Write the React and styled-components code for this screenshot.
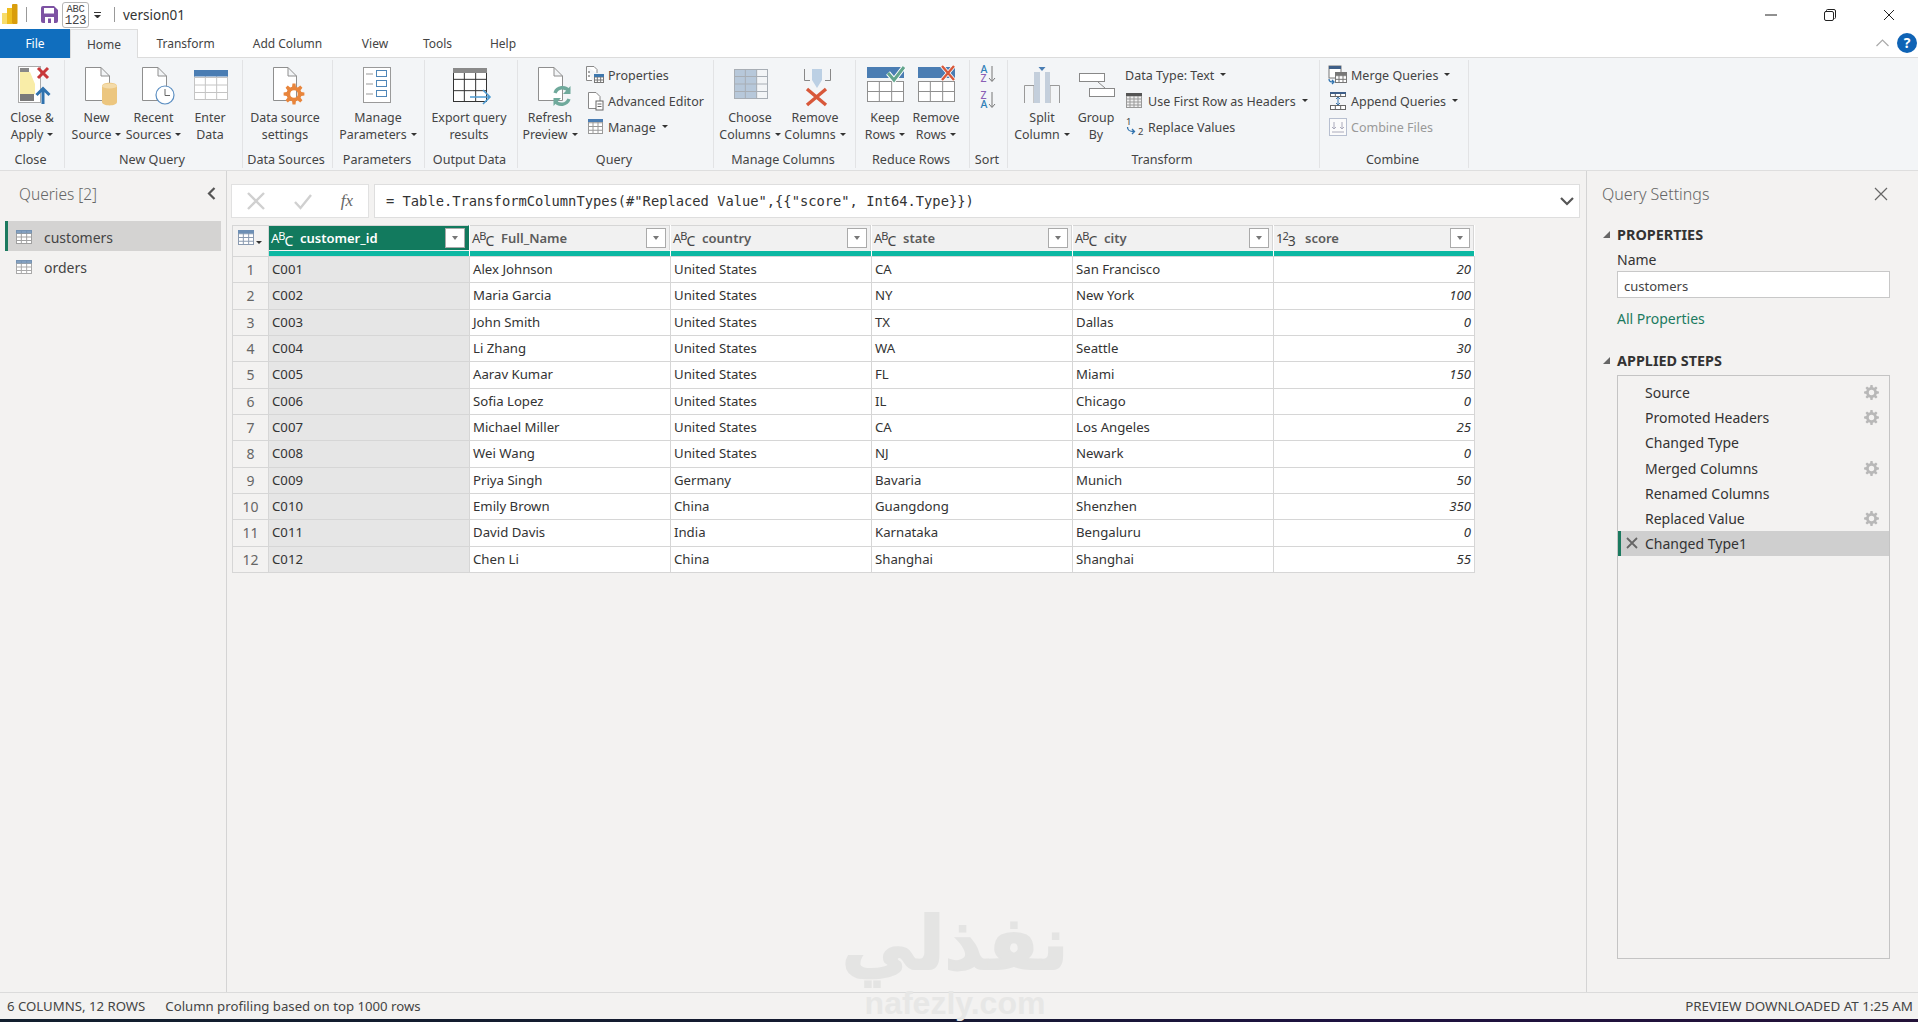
import React from 'react';
import styled, { createGlobalStyle } from 'styled-components';

const UI = '"Noto Sans", "Open Sans", "Liberation Sans", sans-serif';

const Global = createGlobalStyle`
  html, body { margin: 0; padding: 0; background: #f3f2f1; }
  body { font-family: ${UI}; color: #333; overflow: hidden; }
  * { box-sizing: border-box; }
`;

const Page = styled.div`
  position: relative; width: 1918px; height: 1022px; overflow: hidden;
  display: flex; flex-direction: column; background: #f3f2f1;
`;

/* ---------- title bar ---------- */
const TitleBar = styled.div`
  height: 29px; background: #fff; display: flex; align-items: center; padding-left: 2px; flex: none;
`;
const TitleSep = styled.span`width: 1px; height: 15px; background: #999; margin: ${p => p.$m};`;
const Abc = styled.div`
  width: 27px; height: 26px; border: 1px solid #b5b5b5; border-radius: 3px; background: #fff; margin-left: 4px;
  font: 10.5px/11px "Liberation Mono", monospace; letter-spacing: -0.3px; color: #444; text-align: center; padding-top: 1px;
`;
const Abc2 = styled.div`font-size: 12.5px; line-height: 12px;`;
const QuickCaret = styled.div`
  width: 7px; margin-left: 5px; border-top: 1px solid #333; padding-top: 2px; height: 6px;
  &::after { content: ''; display: block; border: 3.5px solid transparent; border-top-color: #333; border-bottom: 0; }
`;
const DocName = styled.div`font-size: 13.5px; color: #333; `;
const WinButtons = styled.div`margin-left: auto; display: flex; gap: 0; align-items: center; padding-right: 0; color: #222;`;
const WinBtn = styled.div`width: 59px; display: flex; justify-content: center;`;

/* ---------- tabs ---------- */
const TabBar = styled.div`
  height: 29px; display: flex; align-items: stretch; background: #fff; border-bottom: 1px solid #dcdcdc; flex: none; font-size: 12px;
`;
const FileTab = styled.div`
  width: 70px; background: #106ebe; color: #fff; display: flex; align-items: center; justify-content: center; margin-bottom: -1px;
`;
const Tab = styled.div`
  width: ${p => p.$w}px; display: flex; align-items: center; justify-content: center; color: #444;
  ${p => p.$active ? 'background:#f3f5f7;border:1px solid #dcdcdc;border-bottom:0;margin-bottom:-1px;' : ''}
`;
const TabRight = styled.div`margin-left: auto; display: flex; align-items: center; gap: 8px; padding-right: 1px;`;
const Help = styled.div`
  width: 20px; height: 20px; border-radius: 50%; background: #0f63b5; color: #fff; font: bold 14px/20px ${UI}; text-align: center;
`;

/* ---------- ribbon ---------- */
const Ribbon = styled.div`
  height: 113px; background: #f3f5f7; border-bottom: 1px solid #dedede; display: flex; flex: none; padding: 2px 0 2px;
`;
const Group = styled.div`
  width: ${p => p.$w}px; border-right: 1px solid #e2e3e5; display: flex; flex-direction: column; flex: none;
`;
const GroupBody = styled.div`flex: 1; display: flex; align-items: flex-start; padding-left: ${p => p.$pl || 0}px; padding-top: 4px;`;
const GroupLabel = styled.div`
  height: 20px; text-align: center; font-size: 12.6px; line-height: 24px; color: #444; padding-right: 3px; margin-bottom: 0; white-space: nowrap;
`;
const Large = styled.div`
  width: ${p => p.$w}px; flex: none; display: flex; flex-direction: column; align-items: center;
`;
const IconSlot = styled.div`width: 44px; height: 42px; flex: none;`;
const LargeLabel = styled.div`
  margin-top: 3px; font-size: 12.4px; line-height: 17px; color: #444; text-align: center; white-space: nowrap;
`;
const Caret = styled.span`
  display: inline-block; vertical-align: middle; margin-left: ${p => p.$ml ?? 4}px; position: relative; top: -1px;
  border: 3px solid transparent; border-top: 3.5px solid #333; border-bottom: 0;
`;
const CornerCaret = styled(Caret)`margin-left: 0; top: 11px;`;
const SmallCol = styled.div`display: flex; flex-direction: column; margin-left: ${p => p.$ml || 0}px; margin-top: -2px;`;
const SmallRow = styled.div`
  height: 26px; display: flex; align-items: center; font-size: 12.5px; color: ${p => p.$off ? '#999' : '#444'}; white-space: nowrap;
`;
const SmallIcon = styled.span`width: ${p => p.$w || 20}px; height: 20px; flex: none; display: flex; align-items: center; margin-right: ${p => p.$mr ?? 3}px;`;
const SortCol = styled.div`width: 100%; display: flex; flex-direction: column; align-items: center; gap: 8px; padding-top: 1px;`;
const SortItem = styled.div`display: flex; align-items: center; gap: 1px;`;
const SortLetters = styled.div`display: flex; flex-direction: column;`;
const SortLetter = styled.span`display: block; height: 9px; font: 500 10.5px/9px ${UI}; color: ${p => p.$c};`;

/* ---------- main ---------- */
const Main = styled.div`flex: 1; display: flex; min-height: 0;`;
const Left = styled.div`width: 227px; border-right: 1px solid #d4d4d4; flex: none; padding: 1px 5px 0; display: flex; flex-direction: column;`;
const LeftHead = styled.div`height: 49px; display: flex; align-items: center; justify-content: space-between; padding: 0 5px 6px 14px; font-size: 15.5px; color: #666; font-weight: 300;`;
const QueryRow = styled.div`
  height: 30px; width: 216px; display: flex; align-items: center; gap: 11px; font-size: 14px; color: #444; padding: 2px 0 0 ${p => p.$on ? 8 : 11}px;
  ${p => p.$on ? 'background:#d4d3d2;border-left:3px solid #1b7a5f;' : ''}
`;
const Center = styled.div`flex: 1; padding: 13px 6px 0 4px; min-width: 0;`;
const FormulaRow = styled.div`display: flex; gap: 5px; height: 34px; `;
const FxBox = styled.div`
  width: 138px; background: #fff; border: 1px solid #e1e1e1; display: flex; align-items: center; justify-content: space-between; padding: 0 15px 0 15px;
`;
const FxText = styled.span`font: italic 17px "Liberation Serif", serif; color: #666;`;
const FormulaBox = styled.div`
  flex: 1; background: #fff; border: 1px solid #dedede; display: flex; align-items: center; justify-content: space-between;
  padding: 0 5px 0 11px; font: 13.75px "DejaVu Sans Mono", monospace; color: #333; white-space: pre;
`;

const Table = styled.div`
  margin: 7px 0 0 1px; width: 1243px; display: grid; grid-template-columns: 36px repeat(6, 201px);
  grid-auto-rows: 26.33px; grid-template-rows: 31px; border-left: 1px solid #d6d6d6; border-bottom: 1px solid #d6d6d6;
`;
const Corner = styled.div`
  background: #f3f2f1; border-right: 1px solid #d6d6d6; border-top: 1px solid #d6d6d6;
  display: flex; align-items: flex-start; padding: 4px 0 0 5px; gap: 1px;
`;
const Head = styled.div`display: flex; flex-direction: column; min-width: 0; border-right: 1px solid #fff;`;
const HeadTop = styled.div`
  height: 25px; flex: none; display: flex; align-items: center; padding: 0 3px 0 2px; border-top: 1px solid #d6d6d6;
  background: ${p => p.$on ? '#127a5e' : '#f1f1f1'}; color: ${p => p.$on ? '#fff' : '#5c5c5c'}; font-size: 13px; font-weight: 600; border-right: 1px solid ${p => p.$on ? '#127a5e' : '#d6d6d6'};
`;
const TypeIcon = styled.span`
  width: 23px; flex: none; font-size: 13px; font-weight: 400; line-height: 14px; white-space: nowrap; letter-spacing: -1px;
  color: ${p => p.$on ? '#fff' : '#444'};
`;
const Sup = styled.span`position: relative; top: -3px; font-size: 11px;`;
const Sub = styled.span`position: relative; top: 3px; font-size: 14px;`;
const HeadName = styled.span`margin-left: 6px; flex: 1;`;
const Filter = styled.div`
  width: 20px; height: 20px; background: #fff; border: 1px solid #aaa; display: flex; align-items: center; justify-content: center;
  &::after { content: ''; border: 3.5px solid transparent; border-top: 4px solid #777; border-bottom: 0; }
`;
const Teal = styled.div`height: 5px; margin-top: 1px; background: #0cb8a3; `;
const Idx = styled.div`
  background: #f3f2f1; border-right: 1px solid #d6d6d6; border-top: 1px solid #d6d6d6; text-align: center; font-size: 14px; line-height: 26px; color: #666;
`;
const Cell = styled.div`
  background: ${p => p.$on ? '#e6e6e6' : '#fff'}; border-right: 1px solid #d6d6d6; border-top: 1px solid #d6d6d6; padding: 0 3px; font-size: 13.2px; line-height: 25px; color: #333;
  text-align: ${p => p.$num ? 'right' : 'left'}; font-style: ${p => p.$num ? 'italic' : 'normal'}; white-space: nowrap; overflow: hidden;
`;

/* ---------- right pane ---------- */
const Right = styled.div`width: 332px; flex: none; padding: 0 28px 0 30px; border-left: 1px solid #d4d4d4; position: relative; display: flex; flex-direction: column;`;
const RightHead = styled.div`height: 50px; margin-left: -15px; margin-right: 2px; padding-bottom: 5px; display: flex; align-items: center; justify-content: space-between; font-size: 16px; color: #666; font-weight: 300;`;
const Section = styled.div`
  height: 26px; display: flex; align-items: center; font-size: 14.4px; font-weight: 700; color: #333; margin-left: -14px; gap: 7px; margin-top: ${p => p.$mt || 0}px; white-space: nowrap;
`;
const SectionTri = styled.span`width: 0; height: 0; border-style: solid; border-width: 0 0 7px 7px; border-color: transparent transparent #666 transparent;`;
const FieldLabel = styled.div`font-size: 14px; line-height: 18px; margin-top: 4px; color: #333;`;
const NameInput = styled.div`
  height: 27px; margin-top: 2px; background: #fff; border: 1px solid #c8c8c8; padding: 2px 6px 0; font-size: 13px; line-height: 25px; color: #444;
`;
const AllProps = styled.div`margin-top: 12px; height: 19px; font-size: 14px; line-height: 17px; color: #1b7a5f;`;
const Steps = styled.div`height: 584px; border: 1px solid #c4c4c4; padding-top: 4px; margin-top: 2px;`;
const Step = styled.div`
  height: 25.2px; display: flex; align-items: center; font-size: 14px; color: #333; position: relative; padding: 0 10px 0 27px;
  ${p => p.$on ? 'background:#cfcfcf;border-left:3px solid #1b7a5f;padding-left:24px;' : ''}
`;
const StepX = styled.span`position: absolute; left: 5px; top: 6px; display: flex;`;
const StepName = styled.span`flex: 1;`;

/* ---------- status ---------- */
const Status = styled.div`
  height: 27px; flex: none; border-top: 1px solid #dbdbdb; display: flex; align-items: center; font-size: 13.2px; color: #444; padding: 0 5px 0 7px;
`;
const StatusSecond = styled.span`margin-left: 20px;`;
const StatusRight = styled.span`margin-left: auto; font-size: 13.4px;`;
const Strip = styled.div`height: 3px; flex: none; background: linear-gradient(90deg, #121f2e, #141a30 45%, #1d1240 70%, #231238);`;

const Mark = styled.div`
  position: absolute; left: 830px; top: 903px; width: 250px; text-align: center; pointer-events: none; color: #e4e4e3;
  font: bold 74px/80px "DejaVu Sans", sans-serif; -webkit-text-stroke: 2px #e4e4e3;
`;
const MarkLatin = styled.div`
  position: absolute; left: 830px; top: 985px; width: 250px; height: 37px; text-align: center; pointer-events: none; color: #e7e7e6;
  font: bold 32px/37px "Liberation Sans", sans-serif;
`;

/* ---------- icons ---------- */
const Svg = ({ children, w = 44, h = 42 }) => (
  <svg width={w} height={h} viewBox={`0 0 ${w} ${h}`} style={{ overflow: 'visible', display: 'block' }}>{children}</svg>
);
const GRAY = '#8f8f8f';
const Doc = ({ x = 10, y = 3, w = 25, h = 34 }) => (
  <path d={`M${x + .5} ${y + .5}H${x + w - 9}L${x + w - .5} ${y + 9}V${y + h - .5}H${x + .5}Z M${x + w - 9} ${y + .5}V${y + 9}H${x + w - .5}`} fill="#fff" stroke={GRAY} strokeWidth="1" />
);
const gearPath = (cx, cy, r) => {
  const n = 8;
  const inner = r * .72;
  const pts = [];
  for (let i = 0; i < n; i++) {
    const a = (i * 2 * Math.PI) / n - Math.PI / 2;
    const w = Math.PI / n / 1.9;
    [[inner, a - w * 1.25], [r, a - w * .7], [r, a + w * .7], [inner, a + w * 1.25]].forEach(([rr, t]) => {
      pts.push(`${(cx + rr * Math.cos(t)).toFixed(2)} ${(cy + rr * Math.sin(t)).toFixed(2)}`);
    });
  }
  const h = r * .36;
  return `M${pts.join('L')}Z M${cx - h} ${cy}a${h} ${h} 0 1 0 ${2 * h} 0a${h} ${h} 0 1 0 ${-2 * h} 0Z`;
};
const Gear = ({ cx, cy, r, c }) => <path d={gearPath(cx, cy, r)} fill={c} fillRule="evenodd" />;
const GridIcon = ({ x, y, w, h, cols, rows, line = '#c6c6c6', fill = '#fff' }) => {
  const vs = Array.from({ length: cols - 1 }, (_, i) => x + (w * (i + 1)) / cols);
  const hs = Array.from({ length: rows - 1 }, (_, i) => y + (h * (i + 1)) / rows);
  return (
    <g>
      <rect x={x + .5} y={y + .5} width={w - 1} height={h - 1} fill={fill} stroke={line} />
      {vs.map(v => <line key={v} x1={v} x2={v} y1={y} y2={y + h} stroke={line} />)}
      {hs.map(v => <line key={v} y1={v} y2={v} x1={x} x2={x + w} stroke={line} />)}
    </g>
  );
};
const IcoClose = () => (
  <Svg>
    <rect x="8.5" y="2.5" width="22" height="36" fill="#fff" stroke="#aaa" />
    <rect x="10" y="4" width="9" height="4" fill="#888" />
    <path d="M10 8H20L25 20V30H10Z" fill="#f9eda8" />
    <rect x="10" y="30" width="14" height="7" fill="#7a7a7a" />
    <path d="M28 4L38 14M38 4L28 14" stroke="#c8383a" strokeWidth="3" />
    <path d="M33 40V26M26.5 31L33 24.5L39.5 31" stroke="#2f72ae" strokeWidth="3" fill="none" />
  </Svg>
);
const IcoNew = () => (
  <Svg><Doc />
    <path d="M27 22C27 17.5 42 17.5 42 22V38C42 42.5 27 42.5 27 38Z" fill="#ecc67f" />
    <ellipse cx="34.5" cy="22" rx="7.5" ry="2.4" fill="#f4dba9" />
  </Svg>
);
const IcoRecent = () => (
  <Svg><Doc />
    <circle cx="33" cy="31" r="9" fill="#fff" stroke="#5c8fc2" strokeWidth="1.2" />
    <path d="M33 25V31.5H38" fill="none" stroke="#666" />
  </Svg>
);
const IcoEnter = () => (
  <Svg>
    <GridIcon x={6} y={6} w={34} h={30} cols={3} rows={4} line="#c4c4c4" />
    <rect x="6" y="6" width="34" height="6.5" fill="#4a7db3" />
  </Svg>
);
const IcoSettings = () => (
  <Svg><Doc x={10} w={24} /><Gear cx={31} cy={30} r={10.5} c="#e8853c" /></Svg>
);
const IcoParams = () => (
  <Svg>
    <rect x="7.5" y="3.5" width="27" height="35" fill="#fff" stroke="#9a9a9a" />
    {[10, 20, 30].map(y => <line key={y} x1="10" x2="17" y1={y} y2={y} stroke="#999" />)}
    {[7, 17, 27].map(y => <rect key={y} x="20.5" y={y - .5} width="10" height="6" fill="#fff" stroke="#4e86b8" />)}
  </Svg>
);
const IcoExport = () => (
  <Svg>
    <GridIcon x={6} y={4} w={34} h={34} cols={3} rows={3} line="#333" />
    <rect x="6" y="4" width="34" height="5" fill="#8a8a8a" />
    <path d="M23 33H43M36 26L43 33L36 40" fill="none" stroke="#4e9bd1" strokeWidth="1.6" />
  </Svg>
);
const IcoRefresh = () => (
  <Svg><Doc />
    <path d="M27 29A8 8 0 0 1 41 27" fill="none" stroke="#6fa99b" strokeWidth="3.4" />
    <path d="M42.5 22V30H35Z" fill="#6fa99b" />
    <path d="M41 35A8 8 0 0 1 27 37" fill="none" stroke="#6fa99b" strokeWidth="3.4" />
    <path d="M25.5 42V34H33Z" fill="#6fa99b" />
  </Svg>
);
const IcoChoose = () => (
  <Svg>
    <rect x="6" y="5" width="23" height="30" fill="#b7c8da" />
    <GridIcon x={6} y={5} w={34} h={30} cols={3} rows={4} line="#a8aeb5" fill="none" />
  </Svg>
);
const IcoRemoveCols = () => (
  <Svg>
    <path d="M11.5 5V16.5H17M37.5 5V16.5H32" fill="none" stroke="#888" />
    <path d="M19 5H29V16L24 24L19 16Z" fill="#bcd0e4" />
    <path d="M14 25L33 41M33 25L14 41" stroke="#d8583a" strokeWidth="3.4" />
  </Svg>
);
const IcoKeep = () => (
  <Svg>
    <rect x="4" y="3" width="37" height="11" fill="#4a7db3" />
    <GridIcon x={4} y={17} w={37} h={21} cols={3} rows={2} line="#8f8f8f" />
    <path d="M25 9L31 16L41 3" fill="none" stroke="#fff" strokeWidth="5" />
    <path d="M25 9L31 16L41 3" fill="none" stroke="#62a58d" strokeWidth="3" />
  </Svg>
);
const IcoRemoveRows = () => (
  <Svg>
    <rect x="4" y="3" width="37" height="11" fill="#4a7db3" />
    <GridIcon x={4} y={17} w={37} h={21} cols={3} rows={2} line="#8f8f8f" />
    <path d="M28 2L40 16M40 2L28 16" stroke="#fff" strokeWidth="4" />
    <path d="M28 2L40 16M40 2L28 16" stroke="#d8583a" strokeWidth="2.4" />
  </Svg>
);
const IcoSplit = () => (
  <Svg>
    <path d="M14 39V21.5H4.5V39M30 39V21.5H39.5V39" fill="none" stroke="#999" />
    <rect x="14" y="8" width="6" height="31" fill="#c4cfdc" />
    <rect x="25" y="8" width="5" height="31" fill="#c4cfdc" />
    <path d="M18.5 3H25.5L22 7Z" fill="#4a7db3" />
  </Svg>
);
const IcoGroup = () => (
  <Svg>
    <rect x="5.5" y="9.5" width="25" height="8" fill="#fff" stroke="#888" />
    <rect x="15.5" y="24.5" width="25" height="8" fill="#fff" stroke="#888" />
    <path d="M24 18L31 24" stroke="#888" />
  </Svg>
);
const SmProps = () => (
  <Svg w={20} h={20}>
    <path d="M1.5 1.5H9L12 4.5V8M1.5 1.5V15.5H7" fill="#fff" stroke="#888" />
    <circle cx="4" cy="7" r="1" fill="#888" /><circle cx="4" cy="11" r="1" fill="#888" />
    <GridIcon x={9} y={9} w={10} h={9} cols={3} rows={3} line="#777" />
    <rect x="9" y="9" width="10" height="3" fill="#3f78ad" />
  </Svg>
);
const SmEditor = () => (
  <Svg w={20} h={20}>
    <path d="M3.5 1.5H11L15 5.5V17.5H3.5Z" fill="#fff" stroke="#888" />
    <rect x="11" y="10" width="7" height="9" fill="#fff" stroke="#666" />
    <path d="M12.5 13H16.5M12.5 15.5H16.5" stroke="#666" />
  </Svg>
);
const SmManage = () => (
  <Svg w={20} h={20}>
    <GridIcon x={3} y={2} w={15} h={15} cols={3} rows={4} line="#999" />
    <rect x="3" y="2" width="15" height="3" fill="#4a7db3" />
  </Svg>
);
const SmHeaders = () => (
  <Svg w={20} h={20}>
    <GridIcon x={1} y={2} w={16} h={15} cols={4} rows={5} line="#999" fill="#f0f0f0" />
    <rect x="1" y="2" width="16" height="3" fill="#555" />
  </Svg>
);
const SmReplace = () => (
  <Svg w={20} h={20}>
    <text x="1" y="8" fontSize="9.5" fill="#444" fontFamily={UI}>1</text>
    <text x="13" y="18" fontSize="9.5" fill="#444" fontFamily={UI}>2</text>
    <path d="M2.5 10C2.5 14 5 14.5 9 14.5M7 12L9.5 14.5L7 17" fill="none" stroke="#2f72ae" strokeWidth="1.3" />
  </Svg>
);
const SmMerge = () => (
  <Svg w={20} h={20}>
    <rect x="1" y="1" width="12" height="12" fill="#fff" stroke="#777" />
    <rect x="1" y="1" width="12" height="3" fill="#3f5f88" />
    <GridIcon x={7} y={7} w={12} h={11} cols={3} rows={3} line="#777" />
    <rect x="7" y="7" width="12" height="3" fill="#777" />
    <path d="M1 14C1 17 3 17 6 17M4 15L6 17L4 19" fill="none" stroke="#2f72ae" strokeWidth="1.3" />
  </Svg>
);
const SmAppend = () => (
  <Svg w={20} h={20}>
    <GridIcon x={2} y={1} w={16} h={5} cols={3} rows={1} line="#666" />
    <rect x="2" y="1" width="16" height="2" fill="#3f5f88" />
    <GridIcon x={2} y={14} w={16} h={5} cols={3} rows={1} line="#666" />
    <path d="M10 6V14M8 8L10 6L12 8M8 12L10 14L12 12" fill="none" stroke="#3f78ad" />
  </Svg>
);
const SmCombine = () => (
  <Svg w={20} h={20}>
    <rect x="1.5" y="1.5" width="17" height="17" fill="#fbfbfb" stroke="#b7bfd0" />
    <path d="M6 5V12M4 10L6 12L8 10M14 5V12M12 10L14 12L16 10M4 15H16" fill="none" stroke="#aab" />
  </Svg>
);
const TableMini = ({ faded }) => (
  <Svg w={17} h={15}>
    <GridIcon x={0} y={0} w={16} h={14} cols={3} rows={4} line={faded ? '#a9a9a9' : '#a0a0a0'} />
    <rect x="0" y="0" width="16" height="3.4" fill="#6d8fb5" opacity=".85" />
  </Svg>
);
const Logo = () => (
  <Svg w={16} h={21}>
    <rect x="0" y="9" width="5.5" height="11" fill="#f7dc6b" />
    <rect x="5" y="4" width="5.5" height="16" fill="#efbe1f" />
    <rect x="10" y="0" width="5.5" height="20" rx="1" fill="#d99d0b" />
  </Svg>
);
const Save = () => (
  <Svg w={17} h={17}>
    <path d="M0 2Q0 0 2 0H13L17 4V15Q17 17 15 17H2Q0 17 0 15Z" fill="#7d52a3" />
    <rect x="3" y="2" width="10" height="5.5" fill="#fff" />
    <rect x="4" y="11" width="9" height="6" fill="#fff" />
    <rect x="7" y="12.5" width="3" height="4.5" fill="#7d52a3" />
  </Svg>
);
const X = ({ s = 16, c = '#c8c8c8', w = 2 }) => (
  <Svg w={s} h={s}><path d={`M1 1L${s - 1} ${s - 1}M${s - 1} 1L1 ${s - 1}`} stroke={c} strokeWidth={w} fill="none" /></Svg>
);

/* ---------- data ---------- */
const rows = [
  ['C001', 'Alex Johnson', 'United States', 'CA', 'San Francisco', 20],
  ['C002', 'Maria Garcia', 'United States', 'NY', 'New York', 100],
  ['C003', 'John Smith', 'United States', 'TX', 'Dallas', 0],
  ['C004', 'Li Zhang', 'United States', 'WA', 'Seattle', 30],
  ['C005', 'Aarav Kumar', 'United States', 'FL', 'Miami', 150],
  ['C006', 'Sofia Lopez', 'United States', 'IL', 'Chicago', 0],
  ['C007', 'Michael Miller', 'United States', 'CA', 'Los Angeles', 25],
  ['C008', 'Wei Wang', 'United States', 'NJ', 'Newark', 0],
  ['C009', 'Priya Singh', 'Germany', 'Bavaria', 'Munich', 50],
  ['C010', 'Emily Brown', 'China', 'Guangdong', 'Shenzhen', 350],
  ['C011', 'David Davis', 'India', 'Karnataka', 'Bengaluru', 0],
  ['C012', 'Chen Li', 'China', 'Shanghai', 'Shanghai', 55],
];
const cols = ['customer_id', 'Full_Name', 'country', 'state', 'city', 'score'];
const steps = [
  ['Source', true], ['Promoted Headers', true], ['Changed Type', false], ['Merged Columns', true],
  ['Renamed Columns', false], ['Replaced Value', true], ['Changed Type1', false],
];

const Btn = ({ w, icon, l1, l2, caret }) => (
  <Large $w={w}>
    <IconSlot>{icon}</IconSlot>
    <LargeLabel>{l1}<br />{l2}{caret && <Caret />}</LargeLabel>
  </Large>
);
const Sm = ({ icon, children, caret, off, iw, mr, cm }) => (
  <SmallRow $off={off}>
    {icon && <SmallIcon $w={iw} $mr={mr}>{icon}</SmallIcon>}
    {children}{caret && <Caret $ml={cm ?? 6} />}
  </SmallRow>
);
const Arrow = () => (
  <Svg w={8} h={17}><path d="M4 0V15M1 12L4 15.5L7 12" fill="none" stroke="#777" /></Svg>
);

export default function App() {
  return (
    <Page>
      <Global />
      <TitleBar>
        <Logo />
        <TitleSep $m="0 14px 0 8px" />
        <Save />
        <Abc>ABC<Abc2>123</Abc2></Abc>
        <QuickCaret />
        <TitleSep $m="0 8px 0 13px" />
        <DocName>version01</DocName>
        <WinButtons>
          <WinBtn><Svg w={12} h={12}><path d="M0 6H12" stroke="#222" /></Svg></WinBtn>
          <WinBtn><Svg w={12} h={12}><path d="M2.5 2.5V1.5Q2.5 .5 3.5 .5H10Q11.5 .5 11.5 2V8.5Q11.5 9.5 10.5 9.5M1.5 2.5H8Q9.5 2.5 9.5 4V10Q9.5 11.5 8 11.5H2Q.5 11.5 .5 10V4Q.5 2.5 2 2.5Z" fill="none" stroke="#222" /></Svg></WinBtn>
          <WinBtn><X s={12} c="#222" w={1} /></WinBtn>
        </WinButtons>
      </TitleBar>
      <TabBar>
        <FileTab>File</FileTab>
        <Tab $w={68} $active>Home</Tab>
        <Tab $w={95}>Transform</Tab>
        <Tab $w={109}>Add Column</Tab>
        <Tab $w={66}>View</Tab>
        <Tab $w={59}>Tools</Tab>
        <Tab $w={72}>Help</Tab>
        <TabRight>
          <Svg w={13} h={8}><path d="M.5 7L6.5 1L12.5 7" fill="none" stroke="#aaa" strokeWidth="1.2" /></Svg>
          <Help>?</Help>
        </TabRight>
      </TabBar>
      <Ribbon>
        <Group $w={65}>
          <GroupBody><Btn w={64} icon={<IcoClose />} l1="Close &" l2="Apply" caret /></GroupBody>
          <GroupLabel>Close</GroupLabel>
        </Group>
        <Group $w={178}>
          <GroupBody $pl={3}>
            <Btn w={57} icon={<IcoNew />} l1="New" l2="Source" caret />
            <Btn w={57} icon={<IcoRecent />} l1="Recent" l2="Sources" caret />
            <Btn w={56} icon={<IcoEnter />} l1="Enter" l2="Data" />
          </GroupBody>
          <GroupLabel>New Query</GroupLabel>
        </Group>
        <Group $w={90}>
          <GroupBody><Btn w={84} icon={<IcoSettings />} l1="Data source" l2="settings" /></GroupBody>
          <GroupLabel>Data Sources</GroupLabel>
        </Group>
        <Group $w={92}>
          <GroupBody><Btn w={90} icon={<IcoParams />} l1="Manage" l2="Parameters" caret /></GroupBody>
          <GroupLabel>Parameters</GroupLabel>
        </Group>
        <Group $w={93}>
          <GroupBody><Btn w={88} icon={<IcoExport />} l1="Export query" l2="results" /></GroupBody>
          <GroupLabel>Output Data</GroupLabel>
        </Group>
        <Group $w={196}>
          <GroupBody $pl={2}>
            <Btn w={60} icon={<IcoRefresh />} l1="Refresh" l2="Preview" caret />
            <SmallCol $ml={5}>
              <Sm icon={<SmProps />}>Properties</Sm>
              <Sm icon={<SmEditor />}>Advanced Editor</Sm>
              <Sm icon={<SmManage />} caret>Manage</Sm>
            </SmallCol>
          </GroupBody>
          <GroupLabel>Query</GroupLabel>
        </Group>
        <Group $w={142}>
          <GroupBody $pl={2}>
            <Btn w={68} icon={<IcoChoose />} l1="Choose" l2="Columns" caret />
            <Btn w={62} icon={<IcoRemoveCols />} l1="Remove" l2="Columns" caret />
          </GroupBody>
          <GroupLabel>Manage Columns</GroupLabel>
        </Group>
        <Group $w={114}>
          <GroupBody $pl={2}>
            <Btn w={54} icon={<IcoKeep />} l1="Keep" l2="Rows" caret />
            <Btn w={48} icon={<IcoRemoveRows />} l1="Remove" l2="Rows" caret />
          </GroupBody>
          <GroupLabel>Reduce Rows</GroupLabel>
        </Group>
        <Group $w={38}>
          <GroupBody>
            <SortCol>
              <SortItem>
                <SortLetters><SortLetter $c="#2f7fb8">A</SortLetter><SortLetter $c="#8a5fb5">Z</SortLetter></SortLetters>
                <Arrow />
              </SortItem>
              <SortItem>
                <SortLetters><SortLetter $c="#8a5fb5">Z</SortLetter><SortLetter $c="#2f7fb8">A</SortLetter></SortLetters>
                <Arrow />
              </SortItem>
            </SortCol>
          </GroupBody>
          <GroupLabel>Sort</GroupLabel>
        </Group>
        <Group $w={312}>
          <GroupBody $pl={2}>
            <Btn w={64} icon={<IcoSplit />} l1="Split" l2="Column" caret />
            <Btn w={44} icon={<IcoGroup />} l1="Group" l2="By" />
            <SmallCol $ml={7}>
              <Sm caret>Data Type: Text</Sm>
              <Sm icon={<SmHeaders />} iw={20} mr={3} caret>Use First Row as Headers</Sm>
              <Sm icon={<SmReplace />} iw={20} mr={3}>Replace Values</Sm>
            </SmallCol>
          </GroupBody>
          <GroupLabel>Transform</GroupLabel>
        </Group>
        <Group $w={149}>
          <GroupBody $pl={8}>
            <SmallCol>
              <Sm icon={<SmMerge />} caret>Merge Queries</Sm>
              <Sm icon={<SmAppend />} caret>Append Queries</Sm>
              <Sm icon={<SmCombine />} off>Combine Files</Sm>
            </SmallCol>
          </GroupBody>
          <GroupLabel>Combine</GroupLabel>
        </Group>
      </Ribbon>
      <Main>
        <Left>
          <LeftHead>
            Queries [2]
            <Svg w={9} h={13}><path d="M7.5 1L2 6.5L7.5 12" fill="none" stroke="#555" strokeWidth="2.2" /></Svg>
          </LeftHead>
          <QueryRow $on><TableMini />customers</QueryRow>
          <QueryRow><TableMini faded />orders</QueryRow>
        </Left>
        <Center>
          <FormulaRow>
            <FxBox>
              <X s={18} c="#d0d0d0" w={2.4} />
              <Svg w={18} h={15}><path d="M1 8L6.5 14L17 1" fill="none" stroke="#d0d0d0" strokeWidth="2.4" /></Svg>
              <FxText>fx</FxText>
            </FxBox>
            <FormulaBox>
              {'= Table.TransformColumnTypes(#"Replaced Value",{{"score", Int64.Type}})'}
              <Svg w={14} h={9}><path d="M1 1L7 7L13 1" fill="none" stroke="#555" strokeWidth="2.2" /></Svg>
            </FormulaBox>
          </FormulaRow>
          <Table>
            <Corner>
              <Svg w={17} h={15}>
                <GridIcon x={0} y={0} w={16} h={15} cols={3} rows={4} line="#8a9ab0" />
                <rect x="0" y="0" width="16" height="3.5" fill="#6d8fb5" />
              </Svg>
              <CornerCaret />
            </Corner>
            {cols.map((c, i) => (
              <Head key={c}>
                <HeadTop $on={i === 0}>
                  <TypeIcon $on={i === 0}>
                    {c === 'score'
                      ? <>1<Sup>2</Sup><Sub>3</Sub></>
                      : <>A<Sup>B</Sup><Sub>C</Sub></>}
                  </TypeIcon>
                  <HeadName>{c}</HeadName>
                  <Filter />
                </HeadTop>
                <Teal />
              </Head>
            ))}
            {rows.map((r, i) => (
              <React.Fragment key={r[0]}>
                <Idx>{i + 1}</Idx>
                {r.map((v, j) => <Cell key={j} $on={j === 0} $num={j === 5}>{v}</Cell>)}
              </React.Fragment>
            ))}
          </Table>
        </Center>
        <Right>
          <RightHead>
            Query Settings
            <X s={14} c="#666" w={1.2} />
          </RightHead>
          <Section><SectionTri />PROPERTIES</Section>
          <FieldLabel>Name</FieldLabel>
          <NameInput>customers</NameInput>
          <AllProps>All Properties</AllProps>
          <Section $mt={18}><SectionTri />APPLIED STEPS</Section>
          <Steps>
            {steps.map(([n, g], i) => (
              <Step key={n} $on={i === 6}>
                {i === 6 && <StepX><X s={12} c="#666" w={1.8} /></StepX>}
                <StepName>{n}</StepName>
                {g && <Svg w={15} h={15}><Gear cx={7.5} cy={7.5} r={7.5} c="#b8b8b8" /></Svg>}
              </Step>
            ))}
          </Steps>
        </Right>
      </Main>
      <Status>
        <span>6 COLUMNS, 12 ROWS</span>
        <StatusSecond>Column profiling based on top 1000 rows</StatusSecond>
        <StatusRight>PREVIEW DOWNLOADED AT 1:25 AM</StatusRight>
      </Status>
      <Strip />
      <Mark>نفذلي</Mark>
      <MarkLatin>nafezly.com</MarkLatin>
    </Page>
  );
}
